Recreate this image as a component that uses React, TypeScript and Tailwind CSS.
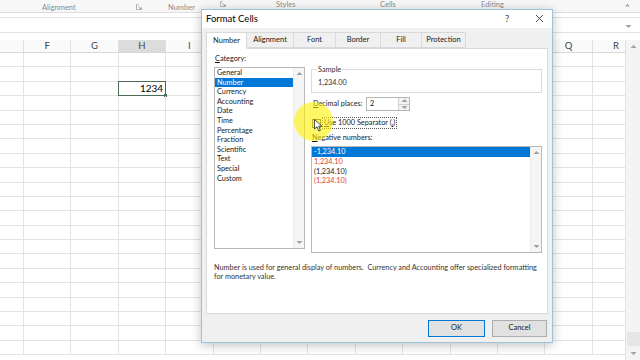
import React from 'react';

const cols = ['E', 'F', 'G', 'H', 'I', 'J', 'K', 'L', 'M', 'N', 'O', 'P', 'Q', 'R'];
const rows = Array.from({ length: 21 }, (_, i) => i);
const categories = ['General', 'Number', 'Currency', 'Accounting', 'Date', 'Time', 'Percentage', 'Fraction', 'Scientific', 'Text', 'Special', 'Custom'];
const negatives = [
  { text: '-1,234.10', red: false, selected: true },
  { text: '1,234.10', red: true, selected: false },
  { text: '(1,234.10)', red: false, selected: false },
  { text: '(1,234.10)', red: true, selected: false },
];
const tabs = ['Number', 'Alignment', 'Font', 'Border', 'Fill', 'Protection'];
const tabWidths = ['w-[41px]', 'w-[47px]', 'w-[42px]', 'w-[45px]', 'w-[41px]', 'w-[44px]'];

const Arrow = ({ up }: { up?: boolean }) => (
  <svg width="7" height="5" viewBox="0 0 7 5">
    <path d={up ? 'M0.5 4 L3.5 1 L6.5 4 Z' : 'M0.5 1 L3.5 4 L6.5 1 Z'} fill="#a0a0a0" />
  </svg>
);

const Launcher = () => (
  <svg width="6" height="6" viewBox="0 0 6 6">
    <path d="M0.5 0.5 H2.5 M0.5 0.5 V5.5 H5.5 V3.5 M2 2 L5 5 M5 3.2 V5 H3.2" stroke="#9a9a9a" strokeWidth="0.7" fill="none" />
  </svg>
);

const ListScroll = () => (
  <div className="w-[11px] h-full bg-[#f5f5f5] border-l border-[#ececec] flex flex-col justify-between items-center py-[3px]">
    <Arrow up />
    <Arrow />
  </div>
);

const App: React.FC = () => {
  return (
    <div className="w-[640px] h-[360px] relative overflow-hidden bg-white font-['Lato','Noto_Sans',sans-serif] text-[#1a1a1a] whitespace-nowrap">
      {/* Ribbon group labels */}
      <div className="h-[13px] bg-[#f7f7f7] border-b border-[#dedede] text-[7.5px] text-[#8c8c8c] relative">
        <span className="absolute left-[42px] top-[2px]">Alignment</span>
        <span className="absolute left-[136px] top-[4px]"><Launcher /></span>
        <span className="absolute left-[168px] top-[2px]">Number</span>
        <span className="absolute left-[220px] top-[1px]"><Launcher /></span>
        <span className="absolute left-[276px] top-[-1px]">Styles</span>
        <span className="absolute left-[380px] top-[-1px]">Cells</span>
        <span className="absolute left-[481px] top-[-1px]">Editing</span>
        <span className="absolute left-[625px] top-[1px] text-[8px] text-[#666]">^</span>
      </div>
      {/* Formula bar */}
      <div className="h-[4px]" />
      <div className="h-[16px] border-y border-[#e2e2e2] flex justify-end items-end pb-[3px] pr-[8px]">
        <Arrow />
      </div>
      <div className="h-[7px]" />

      {/* Grid */}
      <div className="flex h-[320px]">
        <div className="flex-1 overflow-hidden">
          <div className="flex ml-[-23.4px] h-[13px] bg-[#fafafa] border-b border-[#d8d8d8]">
            {cols.map((c) => (
              <div
                key={c}
                className={`w-[47.4px] shrink-0 border-r border-[#e0e0e0] flex items-center justify-center text-[9.5px] text-[#444] ${c === 'H' ? 'bg-[#dcdcdc]' : ''}`}
              >
                {c === 'E' ? '' : c}
              </div>
            ))}
          </div>
          {rows.map((r) => (
            <div key={r} className="flex ml-[-23.4px] h-[14.4px] border-b border-[#e4e4e4]">
              {cols.map((c) => (
                <div key={c} className="w-[47.4px] shrink-0 border-r border-[#e4e4e4] relative">
                  {r === 2 && c === 'H' && (
                    <div className="absolute inset-[-1px] border border-[#4a6b55] flex items-center justify-end pr-[2px] text-[10px] text-black">
                      1234
                      <div className="absolute right-[-2px] bottom-[-2px] w-[3px] h-[3px] bg-[#4a6b55]" />
                    </div>
                  )}
                </div>
              ))}
            </div>
          ))}
        </div>
        {/* Vertical scrollbar */}
        <div className="w-[15px] bg-[#f4f4f4] border-l border-[#e2e2e2] flex flex-col items-center">
          <div className="h-[13px] flex items-center"><Arrow up /></div>
          <div className="flex-1" />
          <div className="w-[13px] h-[14px] bg-[#e6e6e6]" />
          <div className="h-[14px] flex items-center"><Arrow /></div>
        </div>
      </div>
      <div className="h-[4px] border-t border-[#cfcfcf] bg-[#f0f0f0]" />

      {/* Format Cells dialog */}
      <div className="absolute left-[201px] top-[9px] w-[352px] h-[334px] bg-[#f0f0f0] border border-[#9cc3dc] shadow-[0_2px_10px_rgba(0,0,0,0.25)] flex flex-col">
        <div className="h-[18px] bg-white flex items-center pl-[4px] text-[9.5px] text-black relative">
          Format Cells
          <span className="absolute left-[303px] top-[2px] text-[9.5px] text-[#444]">?</span>
          <svg className="absolute left-[333px] top-[4px]" width="9" height="9" viewBox="0 0 9 9">
            <path d="M1 1 L8 8 M8 1 L1 8" stroke="#333" strokeWidth="0.9" />
          </svg>
        </div>
        <div className="h-[4px]" />
        <div className="flex pl-[4px] h-[16px] relative z-10 text-[7.5px]">
          {tabs.map((t, i) => (
            <div
              key={t}
              className={`${tabWidths[i]} flex items-center justify-center border border-[#d9d9d9] ${i > 0 ? 'border-l-0' : ''} ${i === 0 ? 'bg-white border-b-white h-[17px]' : 'bg-[#f0f0f0] h-[16px]'}`}
            >
              <span>{t}</span>
            </div>
          ))}
        </div>
        <div className="mx-[4px] h-[266px] bg-white border border-[#d9d9d9] flex flex-col text-[7.3px] leading-[9.6px]">
          <div className="flex pl-[7px] pt-[5px]">
            {/* Category */}
            <div className="w-[91px] flex flex-col">
              <div className="h-[13px] pl-[1px]"><span className="underline">C</span>ategory:</div>
              <div className="h-[182px] border border-[#b9b9b9] flex">
                <div className="flex-1 flex flex-col">
                  {categories.map((c) => (
                    <div key={c} className={`h-[9.6px] pl-[2px] ${c === 'Number' ? 'bg-[#0078d7] text-white' : ''}`}>
                      {c}
                    </div>
                  ))}
                </div>
                <ListScroll />
              </div>
            </div>
            {/* Right side */}
            <div className="w-[231px] ml-[6px] flex flex-col pt-[11px]">
              <fieldset className="border border-[#dcdcdc] h-[28px] px-[6px]">
                <legend className="px-[1px] ml-[-1px] text-[#333]">Sample</legend>
                <div className="pt-[3px] text-[#333]">1,234.00</div>
              </fieldset>
              <div className="flex items-center h-[14px] mt-[4px] pl-[2px]">
                <span className="w-[53px]"><span className="underline">D</span>ecimal places:</span>
                <div className="w-[44px] h-[14px] border border-[#b5b5b5] flex">
                  <div className="flex-1 pl-[3px] leading-[12px]">2</div>
                  <div className="w-[11px] border-l border-[#d0d0d0] flex flex-col bg-[#f3f3f3]">
                    <div className="flex-1 flex items-center justify-center border-b border-[#d0d0d0]"><Arrow up /></div>
                    <div className="flex-1 flex items-center justify-center"><Arrow /></div>
                  </div>
                </div>
              </div>
              <div className="flex items-center h-[12px] mt-[6px] pl-[1px]">
                <div className="w-[9px] h-[9px] border border-[#555] bg-white" />
                <span className="ml-[1px] px-[1px] border border-dotted border-[#555]">
                  <span className="underline">U</span>se 1000 Separator (<span className="underline">,</span>)
                </span>
              </div>
              <div className="h-[12px] mt-[3px] pl-[1px] flex items-center">
                <span className="underline">N</span>egative numbers:
              </div>
              <div className="h-[107px] mt-[2px] border border-[#b9b9b9] flex">
                <div className="flex-1 flex flex-col">
                  {negatives.map((n, i) => (
                    <div
                      key={i}
                      className={`h-[9.8px] pl-[2px] ${n.selected ? 'bg-[#0078d7] text-white' : n.red ? 'text-[#e0433a]' : 'text-[#222]'}`}
                    >
                      {n.text}
                    </div>
                  ))}
                </div>
                <ListScroll />
              </div>
            </div>
          </div>
          <div className="pl-[7px] pr-[6px] mt-[10px] leading-[9.3px] text-[#333]">
            Number is used for general display of numbers.&nbsp; Currency and Accounting offer specialized formatting
            <br />
            for monetary value.
          </div>
        </div>
        <div className="flex-1 flex justify-end items-center gap-[7px] pr-[5px] text-[7.5px]">
          <button className="w-[57px] h-[17px] bg-[#e1e1e1] border border-[#0078d7]">OK</button>
          <button className="w-[55px] h-[17px] bg-[#e1e1e1] border border-[#adadad]">Cancel</button>
        </div>
      </div>

      {/* Mouse highlight and pointer */}
      <div className="absolute left-[294px] top-[102px] w-[39px] h-[39px] rounded-full bg-[#fff200]/60" />
      <svg className="absolute left-[314px] top-[119px]" width="9" height="13" viewBox="0 0 9 13">
        <path d="M0.5 0.5 L0.5 10 L3 7.8 L4.8 12 L6.4 11.3 L4.7 7.2 L8 7.2 Z" fill="white" stroke="#222" strokeWidth="0.8" />
      </svg>
    </div>
  );
};

export default App;
